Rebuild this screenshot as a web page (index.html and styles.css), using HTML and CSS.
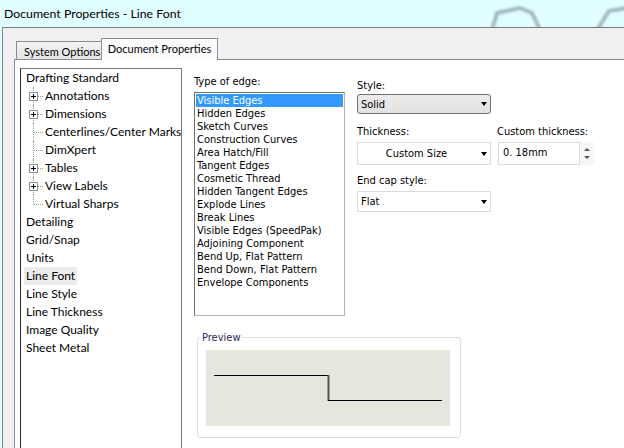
FILE: index.html
```html
<!DOCTYPE html>
<html>
<head>
<meta charset="utf-8">
<link rel="stylesheet" href="styles.css">
</head>
<body>
<div class="title">
  <span class="title-text">Document Properties - Line Font</span>
  <svg class="glass" width="140" height="27" viewBox="0 0 140 27">
    <defs><filter id="bl"><feGaussianBlur stdDeviation="1.3"/></filter></defs>
    <g fill="none" stroke="#a3b8c4" stroke-width="4" filter="url(#bl)">
      <path d="M8 30 L13 13 L36 8 L48 13 L56 30"/>
      <path d="M113 30 L125 11 L142 8"/>
    </g>
  </svg>
</div>
<div class="window">
  <div class="tabs">
    <div class="tab">System Options</div>
    <div class="tab active">Document Properties</div>
  </div>
  <div class="panel">
    <div class="tree">
      <div class="row"><span class="lbl">Drafting Standard</span></div>
      <div class="kids">
        <div class="row"><span class="gut"><svg class="plus" width="9" height="9"><rect x=".5" y=".5" width="8" height="8" fill="#fff" stroke="#919191"/><path d="M2 4.5H7M4.5 2V7" stroke="#000"/></svg></span><span class="lbl">Annotations</span></div>
        <div class="row"><span class="gut"><svg class="plus" width="9" height="9"><rect x=".5" y=".5" width="8" height="8" fill="#fff" stroke="#919191"/><path d="M2 4.5H7M4.5 2V7" stroke="#000"/></svg></span><span class="lbl">Dimensions</span></div>
        <div class="row"><span class="gut"></span><span class="lbl">Centerlines/Center Marks</span></div>
        <div class="row"><span class="gut"></span><span class="lbl">DimXpert</span></div>
        <div class="row"><span class="gut"><svg class="plus" width="9" height="9"><rect x=".5" y=".5" width="8" height="8" fill="#fff" stroke="#919191"/><path d="M2 4.5H7M4.5 2V7" stroke="#000"/></svg></span><span class="lbl">Tables</span></div>
        <div class="row"><span class="gut"><svg class="plus" width="9" height="9"><rect x=".5" y=".5" width="8" height="8" fill="#fff" stroke="#919191"/><path d="M2 4.5H7M4.5 2V7" stroke="#000"/></svg></span><span class="lbl">View Labels</span></div>
        <div class="row last"><span class="gut"></span><span class="lbl">Virtual Sharps</span></div>
      </div>
      <div class="row"><span class="lbl">Detailing</span></div>
      <div class="row"><span class="lbl">Grid/Snap</span></div>
      <div class="row"><span class="lbl">Units</span></div>
      <div class="row"><span class="lbl sel">Line Font</span></div>
      <div class="row"><span class="lbl">Line Style</span></div>
      <div class="row"><span class="lbl">Line Thickness</span></div>
      <div class="row"><span class="lbl">Image Quality</span></div>
      <div class="row"><span class="lbl">Sheet Metal</span></div>
    </div>
    <div class="main">
      <div class="top">
        <div class="edge-col">
          <div class="label">Type of edge:</div>
          <div class="listbox">
            <div class="item selected">Visible Edges</div>
            <div class="item">Hidden Edges</div>
            <div class="item">Sketch Curves</div>
            <div class="item">Construction Curves</div>
            <div class="item">Area Hatch/Fill</div>
            <div class="item">Tangent Edges</div>
            <div class="item">Cosmetic Thread</div>
            <div class="item">Hidden Tangent Edges</div>
            <div class="item">Explode Lines</div>
            <div class="item">Break Lines</div>
            <div class="item">Visible Edges (SpeedPak)</div>
            <div class="item">Adjoining Component</div>
            <div class="item">Bend Up, Flat Pattern</div>
            <div class="item">Bend Down, Flat Pattern</div>
            <div class="item">Envelope Components</div>
          </div>
        </div>
        <div class="props">
          <div class="label">Style:</div>
          <div class="select style-select"><span class="val">Solid</span><span class="arrow"></span></div>
          <div class="pair">
            <div class="field">
              <div class="label">Thickness:</div>
              <div class="select thick"><span class="val center">Custom Size</span><span class="arrow"></span></div>
            </div>
            <div class="field custom">
              <div class="label">Custom thickness:</div>
              <div class="spinrow">
                <div class="input">0. 18mm</div>
                <div class="spin"><span class="up"></span><span class="down"></span></div>
              </div>
            </div>
          </div>
          <div class="label endcap-label">End cap style:</div>
          <div class="select endcap"><span class="val">Flat</span><span class="arrow"></span></div>
        </div>
      </div>
      <fieldset class="preview">
        <legend>Preview</legend>
        <div class="canvas">
          <svg width="244" height="76" viewBox="0 0 244 76">
            <path d="M8 25.5H122" stroke="#000" stroke-width="1.2" fill="none"/>
            <path d="M122.5 25V51" stroke="#555" stroke-width="2" fill="none"/>
            <path d="M122 50.5H236" stroke="#000" stroke-width="1.2" fill="none"/>
          </svg>
        </div>
      </fieldset>
    </div>
  </div>
</div>
</body>
</html>
```
FILE: styles.css
```css
html, body {
  margin: 0;
  padding: 0;
}
body {
  width: 624px;
  height: 448px;
  overflow: hidden;
  background: #e0feff;
  font-family: Lato, "Noto Sans", sans-serif;
  color: #000;
}
.title {
  position: relative;
  height: 27px;
  display: flex;
  align-items: center;
  padding-left: 4px;
  font-size: 12.3px;
}
.title-text {
  margin-top: -1px;
}
.glass {
  position: absolute;
  right: 0;
  top: 0;
}
.window {
  margin-left: 2px;
  border-left: 1px solid #7d8e92;
  border-top: 1px solid #7a7a7a;
  background: #f0f0f0;
  padding-left: 11px;
  height: 420px;
}
.tabs {
  height: 31px;
  display: flex;
  align-items: flex-end;
  padding-left: 2px;
  font-size: 11px;
}
.tab {
  box-sizing: border-box;
  width: 85px;
  height: 18px;
  border-top: 1px solid #898c95;
  border-left: 1px solid #898c95;
  background: linear-gradient(#f3f3f3, #e4e4e4);
  line-height: 17px;
  padding-top: 1px;
  padding-left: 7px;
  white-space: nowrap;
}
.tab.active {
  position: relative;
  z-index: 1;
  width: 117px;
  height: 22px;
  margin-bottom: -1px;
  border-right: 1px solid #898c95;
  background: #fcfcfc;
  line-height: 19px;
  padding-top: 0;
  padding-left: 0;
  text-align: center;
}
.panel {
  display: flex;
  border-left: 1px solid #898c95;
  border-top: 1px solid #898c95;
  background: #fff;
  padding: 8px 0 0 5px;
  height: 400px;
}
.tree {
  box-sizing: border-box;
  width: 162px;
  height: 420px;
  flex: none;
  border: 1px solid #7a7a7a;
  border-left-color: #2a2a2a;
  padding-left: 3px;
  font-size: 12px;
}
.row {
  display: flex;
  height: 18px;
  align-items: center;
}
.lbl {
  padding: 0 2px;
  line-height: 18px;
  white-space: nowrap;
}
.lbl.sel {
  background: #ececec;
}
.gut {
  position: relative;
  width: 19px;
  height: 18px;
  flex: none;
}
.gut::before {
  content: "";
  position: absolute;
  left: 9px;
  top: 0;
  bottom: 0;
  border-left: 1px dotted #9a9a9a;
}
.last .gut::before {
  bottom: 9px;
}
.gut::after {
  content: "";
  position: absolute;
  left: 10px;
  top: 9px;
  width: 9px;
  border-top: 1px dotted #9a9a9a;
}
.plus {
  position: absolute;
  left: 5px;
  top: 5px;
  z-index: 1;
}
.main {
  display: flex;
  flex-direction: column;
  font-family: "DejaVu Sans Condensed", "Liberation Sans", sans-serif;
  font-size: 11px;
}
.top {
  display: flex;
}
.label {
  line-height: 13px;
  white-space: nowrap;
}
.edge-col {
  width: 151px;
  margin-left: 12px;
  padding-top: 7px;
}
.listbox {
  box-sizing: border-box;
  margin-top: 4px;
  height: 224px;
  border: 1px solid #828282;
  border-color: #6f6f6f #b5b5b5 #b5b5b5 #6f6f6f;
  padding: 1px;
}
.item {
  height: 13px;
  line-height: 13px;
  padding-left: 1px;
  white-space: nowrap;
}
.item.selected {
  background: #3399ff;
  color: #fff;
}
.props {
  margin-left: 12px;
  padding-top: 11px;
}
.select {
  box-sizing: border-box;
  width: 134px;
  display: flex;
  align-items: center;
  border: 1px solid #dadada;
  background: #fff;
}
.style-select {
  margin-top: 2px;
  height: 20px;
  border-color: #6f6f6f;
  border-radius: 3px;
  background: linear-gradient(#ececec, #e2e2e2);
}
.val {
  flex: 1;
  padding-left: 3px;
}
.val.center {
  text-align: center;
  padding-left: 0;
  margin-left: 2px;
}
.arrow {
  width: 0;
  height: 0;
  margin-right: 3px;
  border-left: 3.5px solid transparent;
  border-right: 3.5px solid transparent;
  border-top: 4px solid #000;
  margin-left: 8px;
}
.pair {
  display: flex;
  margin-top: 11px;
}
.thick {
  margin-top: 4px;
  height: 23px;
}
.custom {
  margin-left: 7px;
}
.custom .label {
  margin-left: -1px;
}
.spinrow {
  display: flex;
  margin-top: 4px;
  height: 23px;
}
.input {
  box-sizing: border-box;
  width: 82px;
  height: 23px;
  border: 1px solid #dadada;
  padding: 3px 0 0 4px;
  line-height: 13px;
}
.spin {
  width: 14px;
  display: flex;
  flex-direction: column;
  align-items: center;
  justify-content: center;
  gap: 5px;
  background: #f7f7f7;
}
.up, .down {
  width: 0;
  height: 0;
  border-left: 3px solid transparent;
  border-right: 3px solid transparent;
}
.up {
  border-bottom: 3px solid #555;
}
.down {
  border-top: 3px solid #555;
}
.endcap-label {
  margin-top: 9px;
}
.endcap {
  margin-top: 4px;
  height: 21px;
}
.preview {
  box-sizing: border-box;
  width: 264px;
  margin: 15px 0 0 15px;
  padding: 6px 9px 11px 8px;
  border: 1px solid #d5dfe5;
  border-radius: 3px;
  min-width: 0;
}
.preview legend {
  padding: 0 2px;
  margin-left: -6px;
  line-height: 13px;
  color: #1f2a55;
}
.canvas {
  width: 244px;
  height: 76px;
  background: #e6e6dc;
}
.canvas svg {
  display: block;
}
```
